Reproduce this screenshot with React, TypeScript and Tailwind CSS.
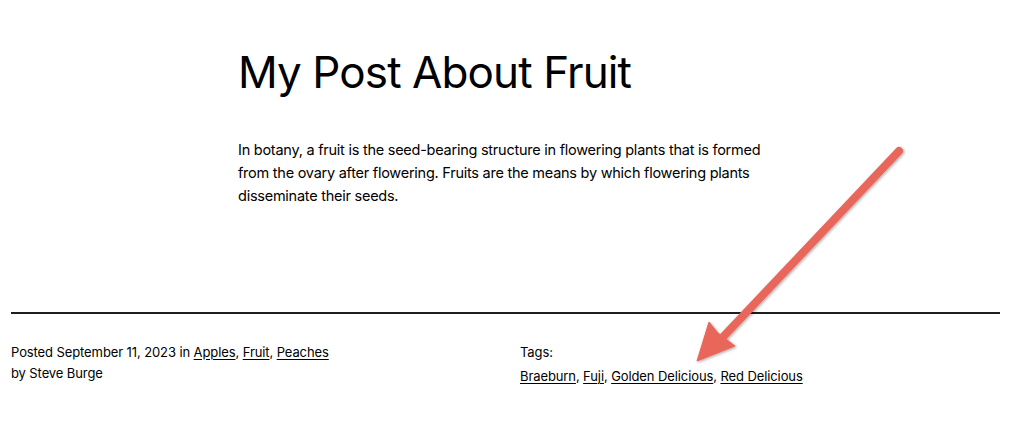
import React from 'react';

const font = { fontFamily: 'Inter, "Noto Sans", sans-serif' };

const Link = ({ children }: { children: React.ReactNode }) => (
  <a href="#" className="underline underline-offset-2 decoration-1">
    {children}
  </a>
);

const Arrow = () => (
  <svg className="absolute left-0 top-0 pointer-events-none" width="1024" height="421" viewBox="0 0 1024 421">
    <defs>
      <filter id="shadow" x="-20%" y="-20%" width="140%" height="140%">
        <feDropShadow dx="1" dy="1" stdDeviation="1.5" floodColor="#000" floodOpacity="0.35" />
      </filter>
    </defs>
    <g filter="url(#shadow)" fill="#e9665a" stroke="#e9665a">
      <line x1="899" y1="151" x2="722" y2="338" strokeWidth="8" strokeLinecap="round" />
      <polygon points="697,361 709,322 718,333 735,346" strokeWidth="1" strokeLinejoin="round" />
    </g>
  </svg>
);

const App = () => {
  return (
    <div className="relative w-[1024px] h-[421px] bg-white text-black overflow-hidden" style={font}>
      <div className="pl-[238px] pt-[44px]">
        <h1 className="text-[44px] leading-[56px] font-normal tracking-[-0.9px]">My Post About Fruit</h1>
        <p className="mt-[38px] w-[540px] text-[14.5px] leading-[23px] tracking-[-0.25px]">
          In botany, a fruit is the seed-bearing structure in flowering plants that is formed from the ovary after
          flowering. Fruits are the means by which flowering plants disseminate their seeds.
        </p>
      </div>
      <div className="ml-[11px] mr-[24px] mt-[105px] border-t-2 border-[#1e1e1e]" />
      <div className="flex px-[11px] pt-[28px] text-[13px] leading-[21px] tracking-[-0.1px]">
        <div className="w-[509px]">
          <div>
            Posted September 11, 2023 in <Link>Apples</Link>, <Link>Fruit</Link>, <Link>Peaches</Link>
          </div>
          <div>by Steve Burge</div>
        </div>
        <div>
          <div>Tags:</div>
          <div className="mt-[3px]">
            <Link>Braeburn</Link>, <Link>Fuji</Link>, <Link>Golden Delicious</Link>, <Link>Red Delicious</Link>
          </div>
        </div>
      </div>
      <Arrow />
    </div>
  );
};

export default App;
